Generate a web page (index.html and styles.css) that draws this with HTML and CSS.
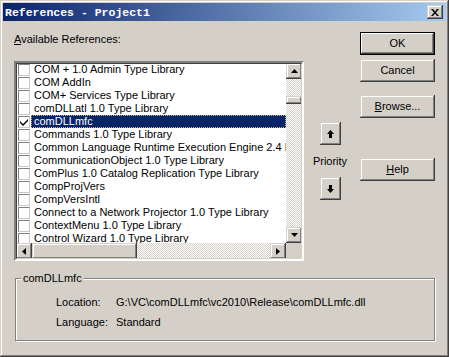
FILE: index.html
```html
<!DOCTYPE html>
<html lang="en">
<head>
    <meta charset="UTF-8">
    <title>References - Project1</title>
    <link rel="stylesheet" href="styles.css">
</head>
<body>
    <div class="window">
        <div class="titlebar">
            <span class="title">References - Project1</span>
            <button class="close" type="button">
                <svg width="8" height="7" viewBox="0 0 8 7"><path d="M0 0h2l2 2.5L6 0h2L5 3.5 8 7H6L4 4.5 2 7H0l3-3.5z" fill="#000"/></svg>
            </button>
        </div>

        <div class="dialog">
            <div class="top">
                <div class="refs">
                    <div class="caption"><u>A</u>vailable References:</div>
                    <div class="listbox">
                        <ul class="items">
                            <li><span class="check"></span><span class="name">COM + 1.0 Admin Type Library</span></li>
                            <li><span class="check"></span><span class="name">COM AddIn</span></li>
                            <li><span class="check"></span><span class="name">COM+ Services Type Library</span></li>
                            <li><span class="check"></span><span class="name">comDLLatl 1.0 Type Library</span></li>
                            <li class="selected"><span class="check checked"><svg width="8" height="8" viewBox="0 0 8 8"><path d="M0 3l3 3 5-5v2L3 8 0 5z" fill="#000"/></svg></span><span class="name">comDLLmfc</span></li>
                            <li><span class="check"></span><span class="name">Commands 1.0 Type Library</span></li>
                            <li><span class="check"></span><span class="name">Common Language Runtime Execution Engine 2.4 Library</span></li>
                            <li><span class="check"></span><span class="name">CommunicationObject 1.0 Type Library</span></li>
                            <li><span class="check"></span><span class="name">ComPlus 1.0 Catalog Replication Type Library</span></li>
                            <li><span class="check"></span><span class="name">CompProjVers</span></li>
                            <li><span class="check"></span><span class="name">CompVersIntl</span></li>
                            <li><span class="check"></span><span class="name">Connect to a Network Projector 1.0 Type Library</span></li>
                            <li><span class="check"></span><span class="name">ContextMenu 1.0 Type Library</span></li>
                            <li><span class="check"></span><span class="name">Control Wizard 1.0 Type Library</span></li>
                        </ul>
                        <div class="vscroll">
                            <span class="sb-btn"><svg width="7" height="4" viewBox="0 0 7 4"><path d="M3.5 0L7 4H0z" fill="#000"/></svg></span>
                            <div class="track">
                                <span class="thumb vthumb"></span>
                            </div>
                            <span class="sb-btn"><svg width="7" height="4" viewBox="0 0 7 4"><path d="M0 0h7L3.5 4z" fill="#000"/></svg></span>
                        </div>
                        <div class="hscroll">
                            <span class="sb-btn"><svg width="4" height="7" viewBox="0 0 4 7"><path d="M4 0v7L0 3.5z" fill="#000"/></svg></span>
                            <span class="thumb hthumb"></span>
                            <div class="track"></div>
                            <span class="sb-btn"><svg width="4" height="7" viewBox="0 0 4 7"><path d="M0 0l4 3.5L0 7z" fill="#000"/></svg></span>
                        </div>
                        <div class="corner"></div>
                    </div>
                </div>

                <div class="priority">
                    <button class="arrow-btn" type="button">
                        <svg width="7" height="8" viewBox="0 0 7 8"><path d="M3.5 0L7 4H5v4H2V4H0z" fill="#000"/></svg>
                    </button>
                    <span class="priority-label">Priority</span>
                    <button class="arrow-btn" type="button">
                        <svg width="7" height="8" viewBox="0 0 7 8"><path d="M2 0h3v4h2L3.5 8 0 4h2z" fill="#000"/></svg>
                    </button>
                </div>

                <div class="actions">
                    <button class="btn default" type="button">OK</button>
                    <button class="btn cancel" type="button">Cancel</button>
                    <button class="btn browse" type="button"><u>B</u>rowse...</button>
                    <button class="btn help" type="button"><u>H</u>elp</button>
                </div>
            </div>

            <fieldset class="details">
                <legend>comDLLmfc</legend>
                <div class="row">
                    <span class="label">Location:</span>
                    <span class="value">G:\VC\comDLLmfc\vc2010\Release\comDLLmfc.dll</span>
                </div>
                <div class="row">
                    <span class="label">Language:</span>
                    <span class="value">Standard</span>
                </div>
            </fieldset>
        </div>
    </div>
</body>
</html>
```

FILE: styles.css
```css
body {
    margin: 0;
    font-family: "Liberation Sans", Arial, sans-serif;
    font-size: 11px;
    line-height: 13px;
    color: #000;
}
u {
    text-decoration: underline;
    text-underline-offset: 1px;
}
.window {
    width: 449px;
    height: 357px;
    box-sizing: border-box;
    padding: 3px;
    background-color: #d4d0c8;
    box-shadow: inset -1px -1px #404040, inset 1px 1px #d4d0c8,
                inset -2px -2px #808080, inset 2px 2px #fff;
}
.titlebar {
    height: 18px;
    display: flex;
    align-items: center;
    justify-content: space-between;
    padding: 0 3px 0 2px;
    background: linear-gradient(to right, #0a246a, #a6caf0);
}
.title {
    font-family: "Liberation Mono", monospace;
    font-size: 11.5px;
    font-weight: bold;
    color: #fff;
}
.close,
.btn,
.arrow-btn,
.sb-btn,
.thumb {
    box-sizing: border-box;
    background-color: #d4d0c8;
    border: none;
    padding: 0;
    font: inherit;
    color: #000;
    display: flex;
    align-items: center;
    justify-content: center;
    box-shadow: inset -1px -1px #404040, inset 1px 1px #d4d0c8,
                inset -2px -2px #808080, inset 2px 2px #fff;
}
.close {
    width: 16px;
    height: 14px;
}
.dialog {
    padding: 11px 0 0 11px;
}
.top {
    display: flex;
}
.caption {
    margin-top: 1px;
}
.listbox {
    margin-top: 15px;
    width: 290px;
    height: 200px;
    box-sizing: border-box;
    border: 2px solid;
    border-color: #808080 #fff #fff #808080;
    display: grid;
    grid-template-columns: 1fr 16px;
    grid-template-rows: 1fr 16px;
    position: relative;
}
.listbox::before {
    content: "";
    position: absolute;
    inset: 0;
    border: 1px solid;
    border-color: #404040 #d4d0c8 #d4d0c8 #404040;
    pointer-events: none;
    z-index: 1;
}
.items {
    list-style: none;
    margin: 0;
    padding: 0 0 0 2px;
    background-color: #fff;
    overflow: hidden;
    white-space: nowrap;
}
.items li {
    display: flex;
    height: 13px;
}
.check {
    flex: none;
    box-sizing: border-box;
    width: 12px;
    height: 12px;
    margin-top: 1px;
    border: 1px solid;
    border-color: #808080 #c8c8c8 #c8c8c8 #808080;
    background-color: #fff;
    display: flex;
    align-items: center;
    justify-content: center;
}
.name {
    flex: 1;
    padding: 0 0 0 3px;
    margin-left: 1px;
}
.selected .name {
    background-color: #0a246a;
    color: #fff;
    outline: 1px dotted #c8c070;
    outline-offset: -1px;
}
.vscroll {
    display: flex;
    flex-direction: column;
}
.sb-btn {
    flex: none;
    width: 16px;
    height: 16px;
}
.track {
    flex: 1;
    background: repeating-conic-gradient(#fff 0 25%, #d4d0c8 0 50%) 0 0 / 2px 2px;
}
.vthumb {
    margin-top: 17px;
    width: 16px;
    height: 8px;
}
.hscroll {
    display: flex;
}
.hthumb {
    flex: none;
    width: 105px;
    height: 16px;
}
.corner {
    background-color: #d4d0c8;
}
.priority {
    width: 40px;
    margin: 90px 0 0 6px;
    display: flex;
    flex-direction: column;
    align-items: center;
}
.arrow-btn {
    width: 21px;
    height: 23px;
}
.priority-label {
    margin: 10px 0 9px;
}
.actions {
    margin-left: 10px;
    display: flex;
    flex-direction: column;
}
.btn {
    width: 75px;
    height: 23px;
}
.btn.default {
    box-shadow: inset 0 0 0 1px #000, inset -2px -2px #404040, inset 2px 2px #fff,
                inset -3px -3px #808080;
}
.cancel {
    margin-top: 4px;
}
.browse {
    margin-top: 13px;
}
.help {
    margin-top: 40px;
}
.details {
    width: 420px;
    box-sizing: border-box;
    margin: 11px 0 0 1px;
    padding: 11px 0 11px 40px;
    border: 1px solid #808080;
    box-shadow: 1px 1px #fff, inset 1px 1px #fff;
}
.details legend {
    margin-left: -35px;
    padding: 0 2px;
    background-color: #d4d0c8;
}
.row {
    display: flex;
}
.row + .row {
    margin-top: 7px;
}
.label {
    width: 60px;
}
```
